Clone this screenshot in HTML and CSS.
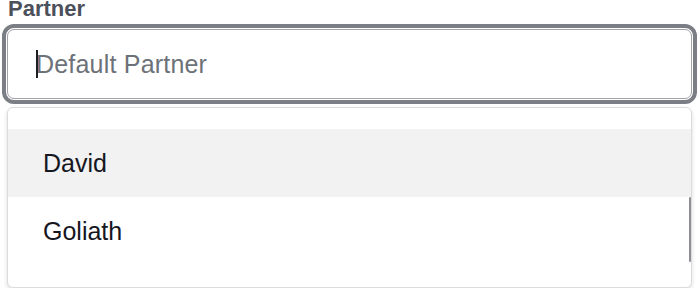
FILE: index.html
```html
<!DOCTYPE html>
<html lang="en">
<head>
  <meta charset="UTF-8" />
  <title>Partner</title>
  <link rel="stylesheet" href="styles.css">
</head>
<body>

  <div class="campo">
    <label class="etichetta">Partner</label>
    <div class="casella">
      <span class="cursore"></span>
      <span class="segnaposto">Default Partner</span>
    </div>

    <ul class="menu">
      <li class="voce attiva">David</li>
      <li class="voce">Goliath</li>
      <span class="barra"></span>
    </ul>
  </div>

</body>
</html>
```

FILE: styles.css
```css
html, body {
  margin: 0;
  padding: 0;
  background: #ffffff;
  font-family: "Liberation Sans", Arial, sans-serif;
}

.campo {
  width: 685px;
  padding-left: 7px;
}

.etichetta {
  display: block;
  padding-left: 1px;
  font-size: 22px;
  line-height: 17px;
  font-weight: 700;
  color: #4b505b;
}

.casella {
  position: relative;
  display: flex;
  align-items: center;
  box-sizing: border-box;
  height: 70px;
  margin-top: 12px;
  padding-left: 28px;
  border: 1px solid #9fa2a8;
  border-radius: 7px;
  outline: 4px solid #7b7e85;
  outline-offset: 1px;
  background: #fff;
}

.segnaposto {
  font-size: 25px;
  letter-spacing: 0.2px;
  color: #6d7178;
}

.cursore {
  position: absolute;
  left: 28px;
  top: 20px;
  width: 2px;
  height: 28px;
  background: #1d1d24;
}

.menu {
  position: relative;
  list-style: none;
  box-sizing: border-box;
  margin: 8px 0 0;
  padding: 21px 0 22px;
  border: 1px solid #dcdcdc;
  border-radius: 6px;
  background: #fff;
  box-shadow: 0 2px 4px rgba(0, 0, 0, 0.14);
}

.voce {
  display: flex;
  align-items: center;
  height: 68px;
  padding-left: 35px;
  font-size: 25px;
  color: #16161f;
}

.voce.attiva {
  background: #f2f2f2;
}

.barra {
  position: absolute;
  right: 0;
  top: 89px;
  width: 2px;
  height: 65px;
  border-radius: 1px;
  background: #8d8f94;
}
```
